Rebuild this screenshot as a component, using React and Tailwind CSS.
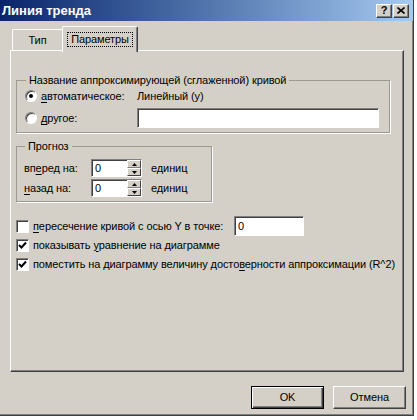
import React from "react";

const font = { fontFamily: '"Liberation Sans", Arial, sans-serif' };

function U({ children }) {
  return <span className="underline underline-offset-[2px]">{children}</span>;
}

function Radio({ checked }) {
  return (
    <span className="w-[12px] h-[12px] rounded-full bg-white border border-t-[#808080] border-l-[#808080] border-r-white border-b-white shadow-[inset_1px_1px_0_#404040] flex items-center justify-center shrink-0">
      {checked && <span className="w-[4px] h-[4px] rounded-full bg-black" />}
    </span>
  );
}

function Checkbox({ checked }) {
  return (
    <span className="w-[13px] h-[13px] bg-white border border-t-[#808080] border-l-[#808080] border-r-white border-b-white shadow-[inset_1px_1px_0_#404040] flex items-center justify-center shrink-0">
      {checked && (
        <svg width="9" height="9" viewBox="0 0 9 9">
          <path d="M1 4 L3.5 6.5 L8 1.5" fill="none" stroke="#000" strokeWidth="2" />
        </svg>
      )}
    </span>
  );
}

function Field({ className, value }) {
  return (
    <div
      className={
        "bg-white border border-t-[#808080] border-l-[#808080] border-r-white border-b-white shadow-[inset_1px_1px_0_#404040] flex items-center pl-[3px] text-black " +
        className
      }
    >
      {value}
    </div>
  );
}

function SpinBox() {
  return (
    <div className="w-[51px] h-[18px] bg-white border border-t-[#808080] border-l-[#808080] border-r-white border-b-white shadow-[inset_1px_1px_0_#404040] flex">
      <div className="flex-1 flex items-center pl-[3px]">0</div>
      <div className="w-[14px] flex flex-col">
        <div className="flex-1 bg-[#D4D0C8] border border-t-white border-l-white border-r-[#404040] border-b-[#808080] flex items-center justify-center">
          <svg width="5" height="3" viewBox="0 0 5 3">
            <path d="M0 3 L2.5 0 L5 3 Z" fill="#000" />
          </svg>
        </div>
        <div className="flex-1 bg-[#D4D0C8] border border-t-white border-l-white border-r-[#404040] border-b-[#404040] flex items-center justify-center">
          <svg width="5" height="3" viewBox="0 0 5 3">
            <path d="M0 0 L2.5 3 L5 0 Z" fill="#000" />
          </svg>
        </div>
      </div>
    </div>
  );
}

function TitleButton({ children }) {
  return (
    <div className="w-[16px] h-[14px] bg-[#D4D0C8] border border-t-white border-l-white border-r-[#404040] border-b-[#404040] shadow-[inset_-1px_-1px_0_#808080] flex items-center justify-center text-black font-bold text-[11px] leading-none">
      {children}
    </div>
  );
}

function Button({ children, isDefault }) {
  return (
    <div
      className={
        "w-[73px] h-[23px] bg-[#D4D0C8] flex items-center justify-center text-black " +
        (isDefault
          ? "border border-black shadow-[inset_1px_1px_0_white,inset_-1px_-1px_0_#404040,inset_-2px_-2px_0_#808080]"
          : "border border-t-white border-l-white border-r-[#404040] border-b-[#404040] shadow-[inset_-1px_-1px_0_#808080]")
      }
    >
      {children}
    </div>
  );
}

export default function App() {
  return (
    <div className="w-[417px] h-[420px] bg-white text-[11px] tracking-[-0.1px] text-black" style={font}>
      <div className="w-[414px] h-[416px] bg-[#D4D0C8] border border-t-0 border-l-0 border-r-[#404040] border-b-[#404040] shadow-[inset_-1px_-1px_0_#808080] flex flex-col">
        {/* title bar */}
        <div className="h-[21px] bg-gradient-to-r from-[#0A246A] to-[#A6CAF0] flex items-center pl-[2px] pr-[4px]">
          <span className="text-white font-bold text-[13px] tracking-normal flex-1">Линия тренда</span>
          <TitleButton>?</TitleButton>
          <div className="ml-[1px]">
            <TitleButton>
              <svg width="8" height="7" viewBox="0 0 8 7">
                <path d="M0.5 0.5 L7.5 6.5 M7.5 0.5 L0.5 6.5" stroke="#000" strokeWidth="1.6" />
              </svg>
            </TitleButton>
          </div>
        </div>

        {/* tabs */}
        <div className="mt-[5px] h-[24px] pl-[12px] flex items-end">
          <div className="w-[50px] h-[21px] border-l border-t border-white rounded-tl-[2px] flex items-center justify-center">
            Тип
          </div>
          <div className="relative z-10 -mb-[2px] w-[76px] h-[26px] bg-[#D4D0C8] border-l border-t border-white border-r border-r-[#404040] rounded-t-[2px] shadow-[inset_-1px_0_0_#808080] flex items-start justify-center pt-[5px]">
            <span className="border border-dotted border-black px-[3px] leading-[13px]">Параметры</span>
          </div>
        </div>

        {/* panel */}
        <div className="ml-[10px] w-[394px] h-[322px] border border-t-white border-l-white border-r-[#404040] border-b-[#404040] shadow-[inset_-1px_-1px_0_#808080] flex flex-col pl-[5px]">
          <fieldset className="mt-[23px] w-[373px] border border-[#9c9990] shadow-[1px_1px_0_white] pl-[8px] pr-[10px] pb-[4px]">
            <legend className="ml-[1px] px-[3px] leading-[13px]">
              Название аппроксимирующей (сглаженной) кривой
            </legend>
            <div className="mt-[2px] h-[14px] flex items-center">
              <div className="w-[112px] flex items-center gap-[4px]">
                <Radio checked />
                <span>
                  <U>а</U>втоматическое:
                </span>
              </div>
              <span>Линейный (y)</span>
            </div>
            <div className="mt-[5px] h-[20px] flex items-center">
              <div className="w-[112px] flex items-center gap-[4px]">
                <Radio />
                <span>
                  <U>д</U>ругое:
                </span>
              </div>
              <Field className="w-[242px] h-[20px]" value="" />
            </div>
          </fieldset>

          <fieldset className="mt-[7px] w-[196px] border border-[#9c9990] shadow-[1px_1px_0_white] pl-[7px] pb-[4px]">
            <legend className="ml-[1px] px-[3px] leading-[13px]">Прогноз</legend>
            <div className="mt-[6px] h-[18px] flex items-center">
              <span className="w-[67px]">
                вп<U>е</U>ред на:
              </span>
              <SpinBox />
              <span className="ml-[9px]">единиц</span>
            </div>
            <div className="mt-[2px] h-[18px] flex items-center">
              <span className="w-[67px]">
                <U>н</U>азад на:
              </span>
              <SpinBox />
              <span className="ml-[9px]">единиц</span>
            </div>
          </fieldset>

          <div className="mt-[14px] h-[20px] flex items-center">
            <Checkbox />
            <span className="ml-[4px] w-[201px]">
              <U>п</U>ересечение кривой с осью Y в точке:
            </span>
            <Field className="w-[70px] h-[20px]" value="0" />
          </div>
          <div className="mt-[2px] h-[14px] flex items-center">
            <Checkbox checked />
            <span className="ml-[4px]">
              показывать <U>у</U>равнение на диаграмме
            </span>
          </div>
          <div className="mt-[5px] h-[14px] flex items-center">
            <Checkbox checked />
            <span className="ml-[4px]">
              поместить на диаграмму величину досто<U>в</U>ерности аппроксимации (R^2)
            </span>
          </div>
        </div>

        {/* buttons */}
        <div className="mt-[14px] flex justify-end gap-[9px] pr-[7px]">
          <Button isDefault>OK</Button>
          <Button>Отмена</Button>
        </div>
      </div>
    </div>
  );
}
